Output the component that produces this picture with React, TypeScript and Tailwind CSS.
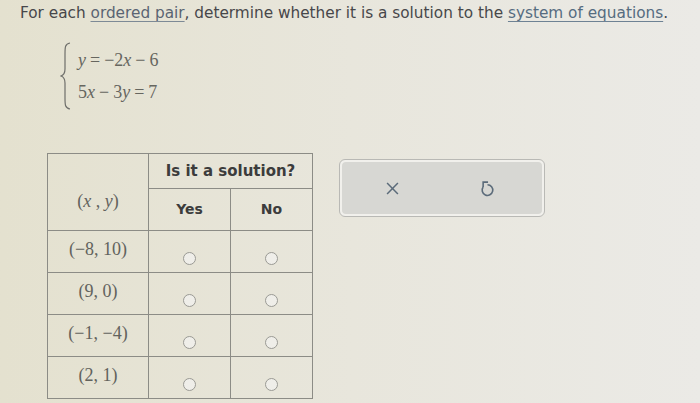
import React from "react";

const serif = { fontFamily: '"Liberation Serif", "Times New Roman", serif' };
const sans = { fontFamily: '"DejaVu Sans", Verdana, sans-serif' };

function Radio() {
  return <span className="inline-block w-[13px] h-[13px] rounded-full border-[1.5px] border-[#9a9a94] bg-[#efeee9]" />;
}

const rows = ["(−8, 10)", "(9, 0)", "(−1, −4)", "(2, 1)"];

function Op({ c }: { c: string }) {
  return <span className="mx-[4px]">{c}</span>;
}

export default function App() {
  return (
    <div className="w-[700px] h-[403px] overflow-hidden bg-gradient-to-r from-[#e4e1cf] via-[#e8e6dc] to-[#ebeae6]" style={sans}>
      <div className="pl-[20px] pt-[2px] text-[15.3px] text-[#47474a] whitespace-nowrap leading-[22px]">
        For each <span className="underline decoration-[#7d8a96] underline-offset-[3px] text-[#5a6472]">ordered pair</span>, determine whether it is a solution to the{" "}
        <span className="underline decoration-[#6e8294] underline-offset-[3px] text-[#566c80]">system of equations</span>.
      </div>

      <div className="flex items-stretch ml-[60px] mt-[18px] h-[68px]" style={serif}>
        <svg width="12" height="68" viewBox="0 0 12 68" className="text-[#6e6e6a]">
          <path d="M10 1 C5 2 5 5 5 12 L5 27 C5 31 4 33 1 34 C4 35 5 37 5 41 L5 56 C5 63 5 66 10 67" fill="none" stroke="currentColor" strokeWidth="1.2" />
        </svg>
        <div className="flex flex-col justify-between pl-[6px] text-[18px] text-[#66665f] leading-[24px] py-[6px]">
          <div><i>y</i><Op c="=" />−2<i>x</i><Op c="−" />6</div>
          <div>5<i>x</i><Op c="−" />3<i>y</i><Op c="=" />7</div>
        </div>
      </div>

      <div className="flex items-start mt-[43px] ml-[47px]">
        <table className="border-collapse border border-[#8c8c86]">
          <tbody>
            <tr className="h-[35px]">
              <td rowSpan={2} className="w-[101px] border border-[#8c8c86] text-center text-[18px] text-[#62625d] pt-[18px]" style={serif}>
                (<i>x</i> , <i>y</i>)
              </td>
              <td colSpan={2} className="border border-[#8c8c86] text-center font-bold text-[15px] text-[#3c3c3c]">Is it a solution?</td>
            </tr>
            <tr className="h-[42px]">
              <td className="w-[82px] border border-[#8c8c86] text-center font-bold text-[14px] text-[#3c3c3c]">Yes</td>
              <td className="w-[82px] border border-[#8c8c86] text-center font-bold text-[14px] text-[#3c3c3c]">No</td>
            </tr>
            {rows.map((r, i) => (
              <tr key={i} className="h-[42px]">
                <td className="border border-[#8c8c86] text-center text-[18px] text-[#62625d] pb-[4px]" style={serif}>{r}</td>
                <td className="border border-[#8c8c86] align-middle"><div className="flex justify-center pt-[14px]"><Radio /></div></td>
                <td className="border border-[#8c8c86] align-middle"><div className="flex justify-center pt-[14px]"><Radio /></div></td>
              </tr>
            ))}
          </tbody>
        </table>

        <div className="ml-[26px] mt-[6px] w-[206px] h-[58px] rounded-[6px] border border-[#b9b9b5] bg-[#f1f0ec] p-[2px]">
          <div className="w-full h-full rounded-[4px] bg-[#d7d7d3] flex items-center pl-[44px] text-[#5b6b7a]">
            <svg width="13" height="13" viewBox="0 0 12 12">
              <path d="M1 1 L11 11 M11 1 L1 11" stroke="currentColor" strokeWidth="1.4" fill="none" />
            </svg>
            <svg width="17" height="17" viewBox="0 0 16 16" className="ml-[80px]">
              <path d="M3.9 6.6 A5 5 0 1 0 8 4.5" stroke="currentColor" strokeWidth="1.5" fill="none" />
              <path d="M3.9 6.6 V2 H8.5" stroke="currentColor" strokeWidth="1.5" fill="none" />
            </svg>
          </div>
        </div>
      </div>
    </div>
  );
}
